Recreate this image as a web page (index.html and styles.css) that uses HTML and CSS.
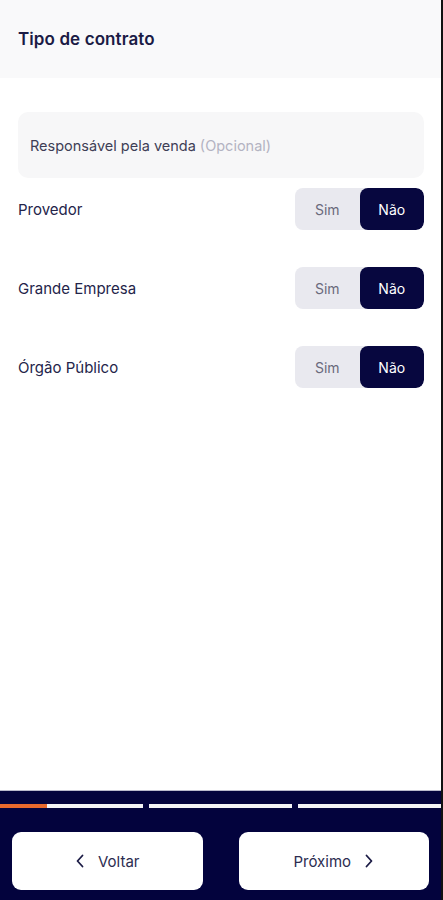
FILE: index.html
```html
<!DOCTYPE html>
<html lang="pt-BR">
<head>
<meta charset="utf-8">
<title>Tipo de contrato</title>
<link rel="stylesheet" href="styles.css">
</head>
<body>
<div class="screen">
  <header class="header">
    <h1 class="title">Tipo de contrato</h1>
  </header>
  <main class="content">
    <div class="field">Responsável pela venda <span class="optional">(Opcional)</span></div>
    <div class="rows">
      <div class="row">
        <span class="label">Provedor</span>
        <div class="toggle"><span class="opt">Sim</span><span class="opt active">Não</span></div>
      </div>
      <div class="row">
        <span class="label">Grande Empresa</span>
        <div class="toggle"><span class="opt">Sim</span><span class="opt active">Não</span></div>
      </div>
      <div class="row">
        <span class="label">Órgão Público</span>
        <div class="toggle"><span class="opt">Sim</span><span class="opt active">Não</span></div>
      </div>
    </div>
  </main>
  <footer class="footer">
    <div class="progress">
      <div class="seg"><div class="fill" style="width:33%"></div></div>
      <div class="seg"></div>
      <div class="seg"></div>
    </div>
    <div class="actions">
      <button class="btn">
        <svg width="10" height="14" viewBox="0 0 10 14"><path d="M7.5 1.5 L2.5 7 L7.5 12.5" fill="none" stroke="#1b1b45" stroke-width="1.8" stroke-linecap="round" stroke-linejoin="round"/></svg>
        <span>Voltar</span>
      </button>
      <button class="btn">
        <span>Próximo</span>
        <svg width="10" height="14" viewBox="0 0 10 14"><path d="M2.5 1.5 L7.5 7 L2.5 12.5" fill="none" stroke="#1b1b45" stroke-width="1.8" stroke-linecap="round" stroke-linejoin="round"/></svg>
      </button>
    </div>
  </footer>
</div>
</body>
</html>
```
FILE: styles.css
```css
* { box-sizing: border-box; }
html, body { margin: 0; padding: 0; }
body {
  font-family: Inter, "Noto Sans", sans-serif;
  background: #ffffff;
  color: #1b1b45;
}
.screen {
  width: 443px;
  height: 900px;
  display: flex;
  flex-direction: column;
  border-right: 2px solid #111111;
  background: #ffffff;
}
.header {
  height: 78px;
  background: #f9f9fa;
  display: flex;
  align-items: center;
  padding: 0 18px 0 18px;
}
.title {
  margin: 0;
  font-size: 17px;
  font-weight: 600;
  color: #1b1b45;
  letter-spacing: 0.1px;
}
.content {
  flex: 1;
  padding: 34px 17px 0 18px;
  display: flex;
  flex-direction: column;
}
.field {
  height: 66px;
  background: #f7f7f8;
  border-radius: 10px;
  display: flex;
  align-items: center;
  padding-left: 12px;
  font-size: 14.5px;
  color: #3e3e55;
}
.optional { color: #b3b3c2; margin-left: 4px; }
.rows {
  margin-top: 10px;
  display: flex;
  flex-direction: column;
  gap: 37px;
}
.row {
  height: 42px;
  display: flex;
  align-items: center;
  justify-content: space-between;
}
.label {
  font-size: 15px;
  color: #24244a;
}
.toggle {
  width: 129px;
  height: 42px;
  display: flex;
  background: #e9e9ef;
  border-radius: 8px;
  overflow: hidden;
}
.opt {
  flex: 1;
  display: flex;
  align-items: center;
  justify-content: center;
  font-size: 14px;
  color: #6a6a7c;
}
.opt.active {
  background: #07073f;
  color: #ffffff;
  border-radius: 8px;
}
.footer {
  height: 110px;
  background: #03033d;
  border-top: 1px solid #b9b9cc;
  padding-top: 13px;
  display: flex;
  flex-direction: column;
}
.progress {
  display: flex;
  gap: 6px;
  height: 4px;
}
.seg {
  flex: 1;
  background: #f3f3f6;
  height: 4px;
}
.fill {
  height: 100%;
  background: #e8692d;
}
.actions {
  margin-top: 24px;
  display: flex;
  gap: 36px;
  padding: 0 12px;
}
.btn {
  flex: 1;
  height: 58px;
  background: #ffffff;
  border: none;
  border-radius: 9px;
  display: flex;
  align-items: center;
  justify-content: center;
  gap: 13px;
  font-family: Inter, "Noto Sans", sans-serif;
  font-size: 15px;
  color: #2c2c50;
  padding: 0;
}
```
